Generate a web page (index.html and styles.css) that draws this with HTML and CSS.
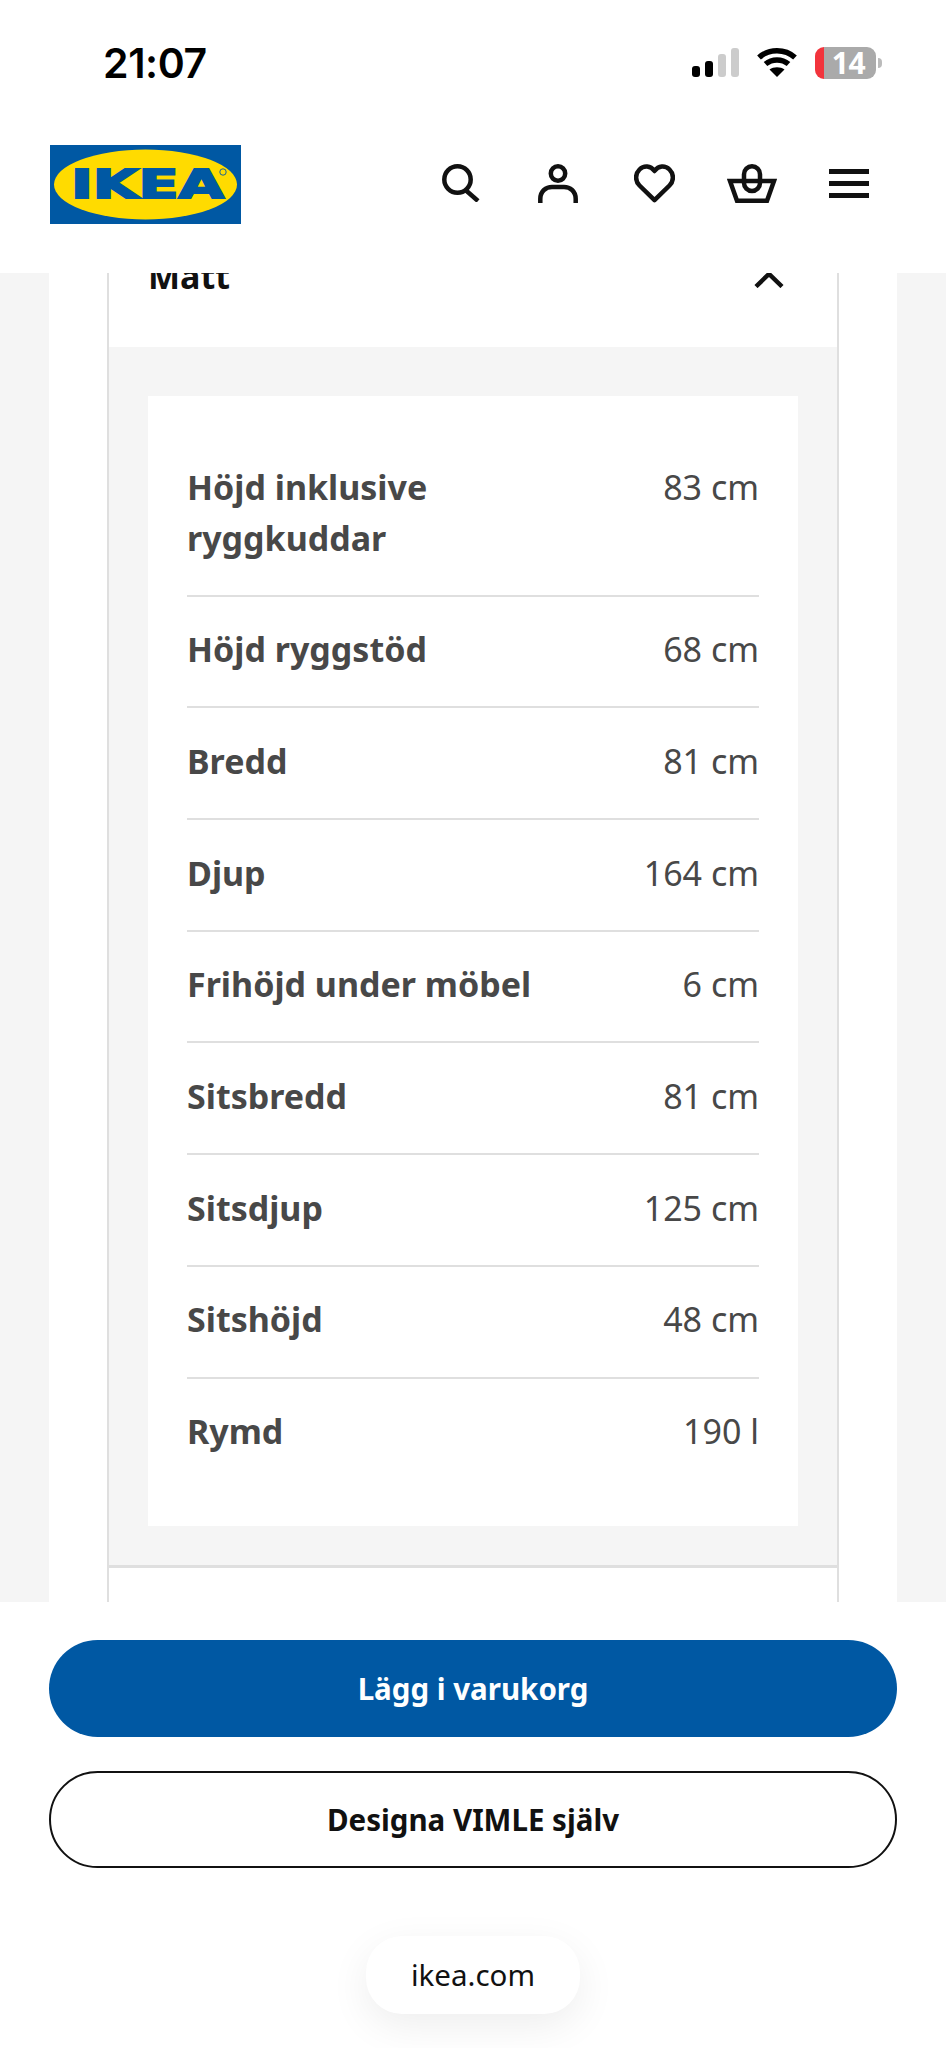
FILE: index.html
```html
<!DOCTYPE html>
<html lang="sv">
<head>
    <meta charset="UTF-8">
    <meta name="viewport" content="width=device-width, initial-scale=1.0">
    <title>VIMLE - Mått</title>
    <link rel="stylesheet" href="styles.css">
</head>
<body>
    <header class="top">
        <div class="status-bar">
            <span class="status-time">21:07</span>
            <div class="status-icons">
                <div class="signal">
                    <span class="signal-bar bar-1"></span>
                    <span class="signal-bar bar-2"></span>
                    <span class="signal-bar bar-3"></span>
                    <span class="signal-bar bar-4"></span>
                </div>
                <svg class="wifi" width="40" height="30" viewBox="0 0 40 30">
                    <path d="M2 10.5C12 1.5 28 1.5 38 10.5" fill="none" stroke="#000" stroke-width="5.5"/>
                    <path d="M8.5 17C15 11.5 25 11.5 31.5 17" fill="none" stroke="#000" stroke-width="5.5"/>
                    <path d="M12.5 22.5C16.5 19.5 23.5 19.5 27.5 22.5L20 30Z" fill="#000"/>
                </svg>
                <div class="battery">
                    <span class="battery-level">14</span>
                    <span class="battery-nub"></span>
                </div>
            </div>
        </div>

        <nav class="nav">
            <svg class="logo" width="191" height="79" viewBox="0 0 191 79">
                <rect width="191" height="79" fill="#0058a3"/>
                <ellipse cx="95.5" cy="39.5" rx="91.5" ry="35" fill="#ffdb00"/>
                <text class="logo-text" x="21" y="53" textLength="153" lengthAdjust="spacingAndGlyphs">IKEA</text>
                <circle cx="173" cy="27" r="3.2" fill="none" stroke="#0058a3" stroke-width="0.9"/>
            </svg>
            <div class="nav-icons">
                <a class="nav-btn">
                    <svg width="38" height="38" viewBox="0 0 38 38" fill="none" stroke="#111" stroke-width="4.5">
                        <circle cx="15.5" cy="15.5" r="13.2"/>
                        <path d="M23.5 26L36 37"/>
                    </svg>
                </a>
                <a class="nav-btn">
                    <svg width="40" height="39" viewBox="0 0 40 39" fill="none" stroke="#111" stroke-width="4.5">
                        <circle cx="20" cy="9.5" r="7.2"/>
                        <path d="M2.3 39V35C2.3 27 8 23 14 23H26C32 23 37.7 27 37.7 35V39"/>
                    </svg>
                </a>
                <a class="nav-btn">
                    <svg width="41" height="39" viewBox="0 0 41 39" fill="none" stroke="#111" stroke-width="4.5" stroke-linejoin="round">
                        <path d="M20.5 36.2L5.5 21.5C1 17 1 10 5.5 5.5C10 1 16.5 1.5 20.5 7C24.5 1.5 31 1 35.5 5.5C40 10 40 17 35.5 21.5Z"/>
                    </svg>
                </a>
                <a class="nav-btn">
                    <svg width="50" height="39" viewBox="0 0 50 39" fill="none" stroke="#111" stroke-width="4.5">
                        <path d="M3 17H47L40 36.8H10Z"/>
                        <rect x="17" y="2.3" width="16" height="24.7" rx="8"/>
                    </svg>
                </a>
                <a class="nav-btn">
                    <div class="menu-icon">
                        <span></span>
                        <span></span>
                        <span></span>
                    </div>
                </a>
            </div>
        </nav>
    </header>

    <main class="page">
        <div class="sheet">
            <section class="accordion">
                <div class="accordion-head">
                    <h2 class="accordion-title">Mått</h2>
                    <svg width="30" height="17" viewBox="0 0 30 17" fill="none" stroke="#111" stroke-width="4.5">
                        <path d="M2 15.5L15 3L28 15.5"/>
                    </svg>
                </div>
                <div class="accordion-body">
                    <dl class="measure-list">
                        <div class="measure-row">
                            <dt>Höjd inklusive<br>ryggkuddar</dt>
                            <dd>83 cm</dd>
                        </div>
                        <div class="measure-row">
                            <dt>Höjd ryggstöd</dt>
                            <dd>68 cm</dd>
                        </div>
                        <div class="measure-row">
                            <dt>Bredd</dt>
                            <dd>81 cm</dd>
                        </div>
                        <div class="measure-row">
                            <dt>Djup</dt>
                            <dd>164 cm</dd>
                        </div>
                        <div class="measure-row">
                            <dt>Frihöjd under möbel</dt>
                            <dd>6 cm</dd>
                        </div>
                        <div class="measure-row">
                            <dt>Sitsbredd</dt>
                            <dd>81 cm</dd>
                        </div>
                        <div class="measure-row">
                            <dt>Sitsdjup</dt>
                            <dd>125 cm</dd>
                        </div>
                        <div class="measure-row">
                            <dt>Sitshöjd</dt>
                            <dd>48 cm</dd>
                        </div>
                        <div class="measure-row">
                            <dt>Rymd</dt>
                            <dd>190 l</dd>
                        </div>
                    </dl>
                </div>
            </section>
        </div>
    </main>

    <footer class="actions">
        <button class="btn btn-primary">Lägg i varukorg</button>
        <button class="btn btn-outline">Designa VIMLE själv</button>
        <div class="url-pill">ikea.com</div>
    </footer>
</body>
</html>
```

FILE: styles.css
```css
* {
    margin: 0;
    padding: 0;
    box-sizing: border-box;
}

html, body {
    height: 100%;
}

body {
    width: 946px;
    height: 2048px;
    display: flex;
    flex-direction: column;
    overflow: hidden;
    background: #fff;
    font-family: 'Noto Sans', 'Open Sans', sans-serif;
}

/* Header */
.top {
    height: 273px;
    flex-shrink: 0;
    background: #fff;
}

.status-bar {
    height: 145px;
    padding: 40px 64px 0 103px;
    display: flex;
    justify-content: space-between;
    align-items: flex-start;
}

.status-time {
    font-family: 'Inter', sans-serif;
    font-size: 41px;
    font-weight: 600;
    line-height: 46px;
    letter-spacing: -0.4px;
    color: #000;
}

.status-icons {
    display: flex;
    align-items: flex-start;
    padding-top: 7px;
}

.signal {
    display: flex;
    align-items: flex-end;
    gap: 5px;
    height: 29px;
    margin-top: 1px;
    margin-right: 18px;
}

.signal-bar {
    width: 8px;
    border-radius: 3px;
    background: #000;
}

.bar-1 { height: 11px; }
.bar-2 { height: 16px; }
.bar-3 { height: 23px; background: #ccc; }
.bar-4 { height: 29px; background: #ccc; }

.wifi {
    margin-right: 18px;
}

.battery {
    display: flex;
    align-items: center;
}

.battery-level {
    width: 61px;
    height: 32px;
    padding-left: 6px;
    border-radius: 9px;
    background: linear-gradient(90deg, #f2343c 9px, #aaa 9px);
    color: #fff;
    font-size: 30px;
    font-weight: 700;
    line-height: 32px;
    letter-spacing: -0.5px;
    text-align: center;
}

.battery-nub {
    width: 4px;
    height: 10px;
    margin-left: 2px;
    border-radius: 0 4px 4px 0;
    background: #bbb;
}

.nav {
    display: flex;
    justify-content: space-between;
    align-items: center;
    padding: 0 49px 0 50px;
    height: 79px;
}

.logo {
    display: block;
}

.logo-text {
    font-family: 'DejaVu Sans', sans-serif;
    font-size: 39px;
    font-weight: 700;
    fill: #0058a3;
    stroke: #0058a3;
    stroke-width: 2px;
}

.nav-icons {
    display: flex;
    align-items: center;
    margin-bottom: 3px;
}

.nav-btn {
    width: 97px;
    display: flex;
    justify-content: center;
}

.menu-icon {
    width: 40px;
    height: 29px;
    display: flex;
    flex-direction: column;
    justify-content: space-between;
}

.menu-icon span {
    height: 5px;
    background: #111;
}

/* Page content, scrolled so the section title is cut by the header */
.page {
    flex: 1;
    overflow: hidden;
    padding: 0 49px;
    background: #f5f5f5;
}

.sheet {
    height: 100%;
    padding: 0 58px;
    background: #fff;
}

.accordion {
    height: 100%;
    border-left: 2px solid #dfdfdf;
    border-right: 2px solid #dfdfdf;
}

.accordion-head {
    height: 74px;
    padding: 0 53px 0 39px;
    display: flex;
    justify-content: space-between;
    align-items: flex-start;
}

.accordion-title {
    margin-top: -20px;
    font-size: 34px;
    font-weight: 700;
    line-height: 46px;
    color: #111;
}

.accordion-head svg {
    display: block;
    margin-top: -2px;
}

.accordion-body {
    padding: 49px 39px 39px;
    border-bottom: 3px solid #dfdfdf;
    background: #f5f5f5;
}

.measure-list {
    padding: 38px 39px 38px;
    background: #fff;
}

.measure-row {
    display: flex;
    justify-content: space-between;
    padding: 27.5px 0 31.2px;
    border-bottom: 2px solid #dfdfdf;
    font-size: 34px;
    line-height: 51px;
    color: #484848;
}

.measure-row:last-child {
    border-bottom: none;
}

.measure-row dt {
    font-weight: 700;
}

/* Bottom actions */
.actions {
    height: 446px;
    flex-shrink: 0;
    padding: 38px 49px 0;
    display: flex;
    flex-direction: column;
    align-items: center;
    background: #fff;
}

.btn {
    width: 100%;
    height: 97px;
    border-radius: 49px;
    font-family: inherit;
    font-size: 29.5px;
    font-weight: 700;
}

.btn-primary {
    border: none;
    background: #0058a3;
    color: #fff;
}

.btn-outline {
    margin-top: 34px;
    border: 2px solid #111;
    background: #fff;
    color: #111;
}

.url-pill {
    width: 214px;
    height: 78px;
    margin-top: 68px;
    border-radius: 36px;
    background: #fff;
    box-shadow: 0 12px 40px rgba(0, 0, 0, 0.07);
    font-size: 29.5px;
    line-height: 78px;
    text-align: center;
    color: #111;
}
```
